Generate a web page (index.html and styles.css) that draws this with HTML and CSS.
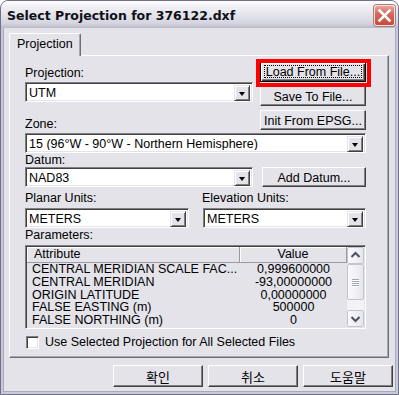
FILE: index.html
```html
<!DOCTYPE html>
<html>
<head>
<meta charset="utf-8">
<title>Select Projection</title>
<link rel="stylesheet" href="styles.css">
</head>
<body>
<div class="window">
  <div class="titlebar">
    <span class="title">Select Projection for 376122.dxf</span>
    <span class="close">
      <svg width="19" height="19" viewBox="0 0 19 19"><path d="M4.5 4.5 L14.5 14.5 M14.5 4.5 L4.5 14.5" stroke="#ffffff" stroke-width="2.6" stroke-linecap="square" fill="none"/></svg>
    </span>
  </div>
  <div class="client">
    <div class="tabstrip"><div class="tab">Projection</div></div>
    <div class="panel">
      <div class="top">
        <div class="col-a">
          <div class="label">Projection:</div>
          <div class="combo combo-a"><span class="val">UTM</span><span class="drop"><span class="tri"></span></span></div>
          <div class="label label-zone">Zone:</div>
        </div>
        <div class="col-b">
          <div class="focus-wrap">
            <div class="btn btn-default"><span class="focus">Load From File...</span></div>
            <div class="annot"></div>
          </div>
          <div class="btn">Save To File...</div>
          <div class="btn">Init From EPSG...</div>
        </div>
      </div>
      <div class="combo combo-full zone-combo"><span class="val">15 (96°W - 90°W - Northern Hemisphere)</span><span class="drop"><span class="tri"></span></span></div>
      <div class="label">Datum:</div>
      <div class="datum-row">
        <div class="combo combo-a"><span class="val">NAD83</span><span class="drop"><span class="tri"></span></span></div>
        <div class="btn btn-datum">Add Datum...</div>
      </div>
      <div class="units-labels">
        <div class="label unit-l">Planar Units:</div>
        <div class="label unit-r">Elevation Units:</div>
      </div>
      <div class="units-row">
        <div class="combo combo-planar"><span class="val">METERS</span><span class="drop"><span class="tri"></span></span></div>
        <div class="combo combo-elev"><span class="val">METERS</span><span class="drop"><span class="tri"></span></span></div>
      </div>
      <div class="label">Parameters:</div>
      <div class="listbox">
        <div class="lb-main">
          <div class="lb-head">
            <div class="hcell h-attr">Attribute</div>
            <div class="hcell h-val">Value</div>
          </div>
          <div class="lb-rows">
            <div class="row"><span class="c-attr">CENTRAL MERIDIAN SCALE FAC...</span><span class="c-val">0,999600000</span></div>
            <div class="row"><span class="c-attr">CENTRAL MERIDIAN</span><span class="c-val">-93,00000000</span></div>
            <div class="row"><span class="c-attr">ORIGIN LATITUDE</span><span class="c-val">0,00000000</span></div>
            <div class="row"><span class="c-attr">FALSE EASTING (m)</span><span class="c-val">500000</span></div>
            <div class="row"><span class="c-attr">FALSE NORTHING (m)</span><span class="c-val">0</span></div>
          </div>
        </div>
        <div class="sb">
          <div class="sb-btn"><svg width="15" height="15" viewBox="0 0 15 15"><path d="M3.5 9 L7.5 5 L11.5 9" stroke="#4a4f63" stroke-width="2" fill="none"/></svg></div>
          <div class="sb-thumb"><span class="grip"></span><span class="grip"></span><span class="grip"></span><span class="grip"></span></div>
          <div class="sb-track"></div>
          <div class="sb-btn"><svg width="15" height="15" viewBox="0 0 15 15"><path d="M3.5 6 L7.5 10 L11.5 6" stroke="#4a4f63" stroke-width="2" fill="none"/></svg></div>
        </div>
      </div>
      <div class="check-row">
        <span class="check"></span>
        <span class="check-label">Use Selected Projection for All Selected Files</span>
      </div>
    </div>
    <div class="dlg-buttons">
      <div class="btn btn-dlg">확인</div>
      <div class="btn btn-dlg">취소</div>
      <div class="btn btn-dlg">도움말</div>
    </div>
  </div>
</div>
</body>
</html>
```
FILE: styles.css
```css
html, body {
  margin: 0;
  padding: 0;
  background: #ffffff;
}

body {
  font-family: "Liberation Sans", Arial, sans-serif;
  font-size: 12.5px;
  color: #000;
}

.window {
  width: 399px;
  height: 395px;
  box-sizing: border-box;
  border: 1px solid #6f7089;
  border-radius: 8px 8px 0 0;
  background: #c9c9d7;
  overflow: hidden;
  display: flex;
  flex-direction: column;
}

.titlebar {
  height: 27px;
  flex: none;
  box-sizing: border-box;
  padding: 2px 3px 0 6px;
  display: flex;
  align-items: center;
  background: linear-gradient(#ffffff 0%, #f1f1f5 18%, #e2e2ea 55%, #d3d3de 85%, #b8b8c9 100%);
}

.title {
  font-family: "DejaVu Sans", Verdana, sans-serif;
  font-weight: bold;
  font-size: 12.5px;
  line-height: 16px;
  color: #101018;
}

.close {
  margin-left: auto;
  width: 21px;
  height: 21px;
  box-sizing: border-box;
  border: 1px solid #f4e6e4;
  border-radius: 3px;
  background: linear-gradient(#eba59b 0%, #d9685b 40%, #c9493c 100%);
  box-shadow: 0 0 0 1px #b07a78;
  display: flex;
  align-items: center;
  justify-content: center;
}

.close svg {
  display: block;
}

.client {
  flex: 1;
  margin: 0 2px 2px 2px;
  background: #e3e3e9;
  border-left: 1px solid #a9a9bb;
  border-right: 1px solid #a9a9bb;
  border-bottom: 1px solid #a9a9bb;
  padding: 5px 0 0 5px;
  box-sizing: border-box;
}

.tabstrip {
  height: 22px;
  display: flex;
}

.tab {
  position: relative;
  z-index: 1;
  width: 72px;
  height: 23px;
  box-sizing: border-box;
  border-top: 1px solid #ffffff;
  border-left: 1px solid #ffffff;
  border-right: 1px solid #6e6e78;
  border-radius: 2px 2px 0 0;
  background: #e3e3e9;
  padding: 3px 0 0 7px;
  line-height: 14px;
  box-shadow: inset -1px 0 #a7a7b0;
}

.panel {
  width: 380px;
  height: 303px;
  box-sizing: border-box;
  border-top: 1px solid #ffffff;
  border-left: 1px solid #ffffff;
  border-right: 1px solid #6e6e78;
  border-bottom: 1px solid #6e6e78;
  box-shadow: inset -1px -1px #a7a7b0;
  padding: 6px 22px 0 15px;
}

.label {
  height: 14px;
  line-height: 14px;
  white-space: nowrap;
}

.top {
  display: flex;
  gap: 7px;
}

.col-a {
  width: 228px;
  padding-top: 4px;
}

.col-a .combo {
  margin-top: 2px;
}

.label-zone {
  margin-top: 15px;
}

.col-b {
  width: 106px;
  display: flex;
  flex-direction: column;
  gap: 4px;
}

/* classic sunken combo */
.combo {
  height: 20px;
  box-sizing: border-box;
  background: #ffffff;
  border-top: 1px solid #808080;
  border-left: 1px solid #808080;
  border-right: 1px solid #ffffff;
  border-bottom: 1px solid #ffffff;
  box-shadow: inset 1px 1px #404040, inset -1px -1px #e3e3e9;
  padding: 2px 2px 2px 3px;
  display: flex;
  align-items: stretch;
}

.combo .val {
  flex: 1;
  line-height: 16px;
  white-space: nowrap;
  overflow: hidden;
}

.combo-a {
  width: 228px;
}

.combo-full {
  width: 341px;
}

.zone-combo {
  margin-top: 2px;
}

.drop {
  width: 16px;
  height: 16px;
  flex: none;
  box-sizing: border-box;
  background: #e3e3e9;
  border-top: 1px solid #e3e3e9;
  border-left: 1px solid #e3e3e9;
  border-right: 1px solid #404040;
  border-bottom: 1px solid #404040;
  box-shadow: inset 1px 1px #ffffff, inset -1px -1px #808080;
  display: flex;
  align-items: center;
  justify-content: center;
}

.tri {
  width: 0;
  height: 0;
  border-left: 3.5px solid transparent;
  border-right: 3.5px solid transparent;
  border-top: 4px solid #000;
  margin-top: 1px;
}

/* classic raised button */
.btn {
  height: 20px;
  box-sizing: border-box;
  background: #e3e3e9;
  border-top: 1px solid #ffffff;
  border-left: 1px solid #ffffff;
  border-right: 1px solid #404040;
  border-bottom: 1px solid #404040;
  box-shadow: inset -1px -1px #808080;
  display: flex;
  align-items: center;
  justify-content: center;
  line-height: 14px;
  white-space: nowrap;
  padding-top: 1px;
}

.focus-wrap {
  position: relative;
  height: 20px;
}

.btn-default {
  height: 20px;
  border: 1px solid #000;
  box-shadow: inset 1px 1px #ffffff, inset -1px -1px #404040, inset -2px -2px #808080;
  padding: 2px 3px 3px 3px;
  align-items: stretch;
}

.focus {
  flex: 1;
  border: 1px dotted #000;
  display: flex;
  align-items: center;
  justify-content: center;
  line-height: 12px;
}

.annot {
  position: absolute;
  left: -4px;
  top: -3px;
  width: 115px;
  height: 28px;
  box-sizing: border-box;
  border: 4px solid #ff0000;
}

.datum-row {
  display: flex;
  gap: 9px;
}

.btn-datum {
  width: 104px;
}

.units-labels {
  display: flex;
  margin-top: 4px;
}

.unit-l {
  width: 177px;
}

.units-row {
  display: flex;
  gap: 14px;
  margin-top: 3px;
}

.combo-planar {
  width: 164px;
}

.combo-elev {
  width: 163px;
}

/* list view */
.listbox {
  margin-top: 3px;
  width: 341px;
  height: 84px;
  box-sizing: border-box;
  border-top: 1px solid #808080;
  border-left: 1px solid #808080;
  border-right: 1px solid #ffffff;
  border-bottom: 1px solid #ffffff;
  box-shadow: inset 1px 1px #404040, inset -1px -1px #e3e3e9;
  padding: 1px;
  display: flex;
}

.lb-main {
  width: 320px;
  display: flex;
  flex-direction: column;
  overflow: hidden;
}

.lb-head {
  height: 16px;
  flex: none;
  display: flex;
  box-sizing: border-box;
  border-bottom: 1px solid #9a9aa6;
}

.hcell {
  box-sizing: border-box;
  height: 15px;
  line-height: 14px;
  border-right: 1px solid #9a9aa6;
  box-shadow: inset 1px 1px #ffffff;
}

.h-attr {
  width: 213px;
  padding-left: 7px;
}

.h-val {
  width: 107px;
  text-align: center;
}

.lb-rows {
  flex: 1;
}

.row {
  display: flex;
  height: 12.75px;
  line-height: 12.75px;
  white-space: nowrap;
}

.c-attr {
  width: 213px;
  padding-left: 5px;
  box-sizing: border-box;
  overflow: hidden;
}

.c-val {
  width: 107px;
  text-align: center;
}

.sb {
  width: 17px;
  display: flex;
  flex-direction: column;
  background: #f3f3f6;
}

.sb-btn {
  width: 17px;
  height: 17px;
  box-sizing: border-box;
  border: 1px solid #c3c4d2;
  border-radius: 2px;
  background: linear-gradient(90deg, #fbfbfd, #e6e6ee);
  display: flex;
  align-items: center;
  justify-content: center;
}

.sb-btn svg {
  display: block;
}

.sb-thumb {
  width: 17px;
  height: 36px;
  box-sizing: border-box;
  border: 1px solid #c3c4d2;
  border-radius: 2px;
  background: linear-gradient(90deg, #fbfbfd, #e6e6ee);
  display: flex;
  flex-direction: column;
  align-items: center;
  justify-content: center;
  gap: 1px;
}

.grip {
  width: 7px;
  height: 1px;
  background: #a3a4b4;
  box-shadow: 0 1px #ffffff;
}

.sb-track {
  flex: 1;
}

.check-row {
  display: flex;
  align-items: center;
  margin-top: 6px;
  height: 14px;
}

.check {
  width: 13px;
  height: 13px;
  box-sizing: border-box;
  margin-left: 1px;
  background: #ffffff;
  border-top: 1px solid #808080;
  border-left: 1px solid #808080;
  border-right: 1px solid #ffffff;
  border-bottom: 1px solid #ffffff;
  box-shadow: inset 1px 1px #404040, inset -1px -1px #e3e3e9;
}

.check-label {
  margin-left: 6px;
  line-height: 14px;
  white-space: nowrap;
}

.dlg-buttons {
  display: flex;
  justify-content: flex-end;
  gap: 5px;
  margin-top: 7px;
  padding-right: 2px;
}

.btn-dlg {
  width: 90px;
  height: 22px;
  font-family: "Noto Sans CJK KR", "Liberation Sans", sans-serif;
  font-size: 13px;
}
```
